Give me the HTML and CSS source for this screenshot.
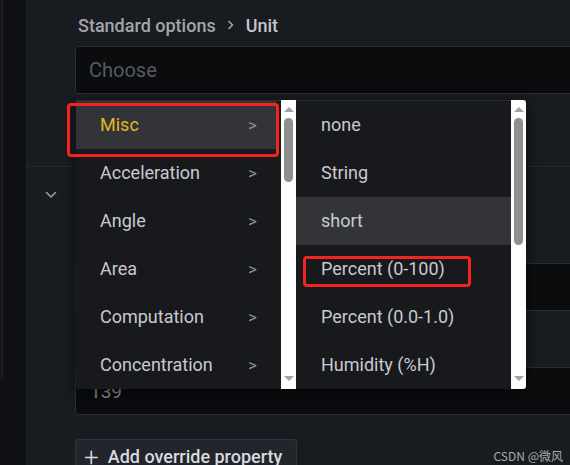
FILE: index.html
```html
<!DOCTYPE html>
<html lang="en">
<head>
<meta charset="utf-8">
<title>Unit picker</title>
<link rel="stylesheet" href="styles.css">
</head>
<body>
<div class="app">
  <div class="rail"><div class="rail-edge"></div></div>
  <div class="main">
    <section class="sec sec-top">
      <div class="crumb">
        <span class="crumb-parent">Standard options</span>
        <svg class="crumb-sep" width="8" height="10" viewBox="0 0 8 10"><path d="M2 1.5 L5.5 5 L2 8.5" fill="none" stroke="#a3a5ab" stroke-width="1.6" stroke-linecap="round" stroke-linejoin="round"/></svg>
        <span class="crumb-cur">Unit</span>
      </div>
      <div class="input input-choose">Choose</div>
    </section>
    <section class="sec sec-override">
      <div class="chev">
        <svg width="12" height="8" viewBox="0 0 12 8"><path d="M1.5 1.5 L6 6 L10.5 1.5" fill="none" stroke="#9a9ca3" stroke-width="1.6" stroke-linecap="round" stroke-linejoin="round"/></svg>
      </div>
      <div class="ov-body">
        <div class="input input-a"></div>
        <div class="input input-b">139</div>
        <button class="add-btn"><span class="plus">+</span>Add override property</button>
      </div>
    </section>
  </div>

  <div class="menus">
    <div class="menu menu-cat">
      <ul class="menu-list">
        <li class="item item-active"><span>Misc</span><span class="arrow">&gt;</span></li>
        <li class="item"><span>Acceleration</span><span class="arrow">&gt;</span></li>
        <li class="item"><span>Angle</span><span class="arrow">&gt;</span></li>
        <li class="item"><span>Area</span><span class="arrow">&gt;</span></li>
        <li class="item"><span>Computation</span><span class="arrow">&gt;</span></li>
        <li class="item"><span>Concentration</span><span class="arrow">&gt;</span></li>
      </ul>
      <div class="scroll">
        <div class="tri tri-up"></div>
        <div class="thumb thumb-cat"></div>
        <div class="tri tri-down"></div>
      </div>
    </div>
    <div class="menu menu-unit">
      <ul class="menu-list">
        <li class="item"><span>none</span></li>
        <li class="item"><span>String</span></li>
        <li class="item item-hover"><span>short</span></li>
        <li class="item"><span>Percent (0-100)</span></li>
        <li class="item"><span>Percent (0.0-1.0)</span></li>
        <li class="item"><span>Humidity (%H)</span></li>
      </ul>
      <div class="scroll scroll-last">
        <div class="tri tri-up"></div>
        <div class="thumb thumb-unit"></div>
        <div class="tri tri-down"></div>
      </div>
    </div>
  </div>

  <div class="mark mark-misc"></div>
  <div class="mark mark-pct"></div>
  <div class="watermark">CSDN @微风</div>
</div>
</body>
</html>
```

FILE: styles.css
```css
* { box-sizing: border-box; }
html, body { margin: 0; padding: 0; }
body {
  width: 570px;
  height: 465px;
  overflow: hidden;
  background: #181b1f;
  font-family: Roboto, "Liberation Sans", Arial, sans-serif;
}
.app {
  position: relative;
  display: flex;
  width: 570px;
  height: 465px;
  overflow: hidden;
}
.rail {
  width: 26px;
  flex: none;
  background: #0f1013;
  position: relative;
}
.rail-edge {
  width: 3px;
  height: 380px;
  background: #16171b;
  border-right: 1px solid #202226;
  border-bottom-right-radius: 3px;
}
.main {
  flex: 1;
  min-width: 0;
  border-left: 1px solid #24262b;
  background: #181b1f;
  display: flex;
  flex-direction: column;
}
.sec {
  border-bottom: 1px solid #26282d;
}
.sec-top {
  flex: none;
  height: 167px;
  padding: 14px 0 0 48px;
}
.crumb {
  display: flex;
  align-items: center;
  gap: 10px;
  font-size: 18px;
  font-weight: 500;
  height: 22px;
  margin-left: 3px;
}
.crumb-parent { color: #a3a5ab; }
.crumb-cur { color: #c4c6cd; }
.crumb-sep { margin: 0 1px; }
.input {
  flex: none;
  background: #0b0c0e;
  border: 1px solid #2b2d32;
  border-radius: 3px;
  height: 48px;
  width: 520px;
}
.input-choose {
  margin-top: 10px;
  padding-left: 13px;
  display: flex;
  align-items: center;
  font-size: 20px;
  color: #575a62;
}
.sec-override {
  flex: none;
  border-bottom: none;
  display: flex;
}
.chev {
  width: 48px;
  flex: none;
  padding: 24px 0 0 18px;
}
.chev svg { display: block; }
.ov-body {
  display: flex;
  flex-direction: column;
  align-items: flex-start;
  padding-top: 96px;
}
.input-a { height: 48px; }
.input-b {
  margin-top: 56px;
  padding: 0 0 0 14px;
  display: flex;
  align-items: center;
  font-size: 19px;
  color: #8e9097;
}
.add-btn {
  flex: none;
  margin-top: 24px;
  width: 222px;
  height: 40px;
  background: #22252b;
  border: 1px solid #30333a;
  border-radius: 3px;
  color: #d9dadf;
  font-family: Roboto, "Liberation Sans", Arial, sans-serif;
  font-size: 18px;
  font-weight: 500;
  display: flex;
  align-items: flex-start;
  padding: 6px 0 0 8px;
  gap: 9px;
}
.plus {
  font-size: 26px;
  font-weight: 300;
  line-height: 20px;
  margin-top: 1px;
}

/* dropdown menus */
.menus {
  position: absolute;
  left: 76px;
  top: 100px;
  display: flex;
  height: 289px;
  box-shadow: 0 4px 14px rgba(0,0,0,0.55);
  border-radius: 3px;
}
.menu {
  display: flex;
  height: 289px;
  background: #18191d;
  border-top: 1px solid #2a2c31;
}
.menu-cat { width: 220px; border-bottom-left-radius: 3px; }
.menu-unit { width: 230px; }
.menu-list {
  list-style: none;
  margin: 0;
  padding: 0;
  flex: 1;
}
.item {
  height: 48px;
  display: flex;
  align-items: center;
  justify-content: space-between;
  padding: 0 24px 1px 24px;
  font-size: 18px;
  color: #c8c9d1;
}
.menu-unit .item { padding-left: 25px; }
.item-active { background: #333437; color: #e3b624; margin-right: 5px; padding-right: 19px; }
.item-hover { background: #333437; }
.arrow {
  font-size: 17px;
  color: #8d8f96;
}
.scroll {
  width: 15px;
  flex: none;
  background: #fdfdfd;
  position: relative;
  margin-top: -1px;
}
.scroll-last { border-top-right-radius: 3px; border-bottom-right-radius: 3px; }
.tri {
  position: absolute;
  left: 3px;
  width: 0;
  height: 0;
  border-left: 5px solid transparent;
  border-right: 5px solid transparent;
}
.tri-up { top: 7px; border-bottom: 5px solid #a3a3a3; }
.tri-down { bottom: 8px; border-top: 5px solid #a3a3a3; }
.thumb {
  position: absolute;
  left: 3px;
  width: 9px;
  top: 18px;
  background: #8f8f8f;
  border-radius: 5px;
}
.thumb-cat { height: 64px; }
.thumb-unit { height: 127px; }

/* annotation marks */
.mark {
  position: absolute;
  border: 3px solid #f52222;
  border-radius: 4px;
}
.mark-misc { left: 67px; top: 103px; width: 212px; height: 54px; }
.mark-pct { left: 303px; top: 256px; width: 168px; height: 31px; }

.watermark {
  position: absolute;
  right: 7px;
  bottom: 1px;
  font-family: "Noto Sans CJK SC", "Noto Sans", sans-serif;
  font-size: 12px;
  color: #a9abb0;
}
```
